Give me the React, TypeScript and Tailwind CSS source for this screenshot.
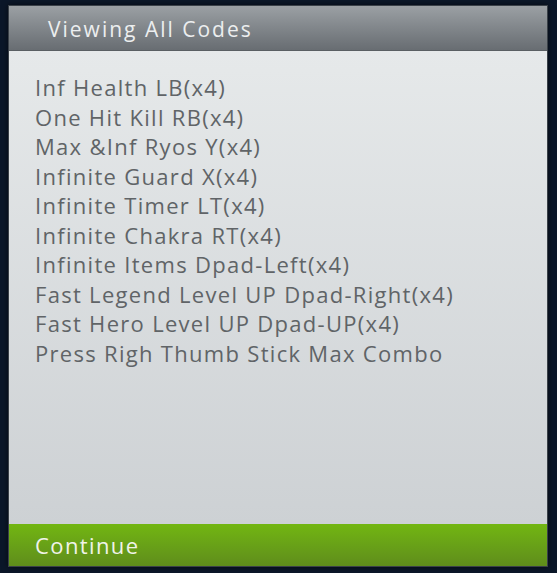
import React from "react";

const codes = [
  "Inf Health LB(x4)",
  "One Hit Kill RB(x4)",
  "Max &Inf Ryos Y(x4)",
  "Infinite Guard X(x4)",
  "Infinite Timer LT(x4)",
  "Infinite Chakra RT(x4)",
  "Infinite Items Dpad-Left(x4)",
  "Fast Legend Level UP Dpad-Right(x4)",
  "Fast Hero Level UP Dpad-UP(x4)",
  "Press Righ Thumb Stick Max Combo",
];

export default function App() {
  return (
    <div className="w-[557px] h-[573px] bg-[#0b1729] pt-[5px] pl-[8px] pr-[9px] font-['Open_Sans',sans-serif] overflow-hidden">
      <div className="h-[562px] flex flex-col border border-[#3a4148] shadow-[0_0_6px_rgba(0,0,0,0.6)]">
        <div className="h-[45px] shrink-0 flex items-center pl-[39px] pt-[4px] bg-gradient-to-b from-[#9ba0a4] to-[#686d72] border-b border-[#5a5f63]">
          <span className="text-[21px] text-[#eceeef] tracking-[2px]">Viewing All Codes</span>
        </div>
        <div className="flex-1 bg-gradient-to-b from-[#e6e9ea] to-[#cdd1d4] pt-[22px] pl-[26px]">
          {codes.map((c) => (
            <div key={c} className="text-[22px] leading-[29.5px] text-[#606467] tracking-[1.3px]">
              {c}
            </div>
          ))}
        </div>
        <div className="h-[42px] shrink-0 flex items-center pl-[26px] bg-gradient-to-b from-[#72b611] to-[#5f8d1b]">
          <span className="text-[22px] text-[#f0f3ea] tracking-[1.4px]">Continue</span>
        </div>
      </div>
    </div>
  );
}
